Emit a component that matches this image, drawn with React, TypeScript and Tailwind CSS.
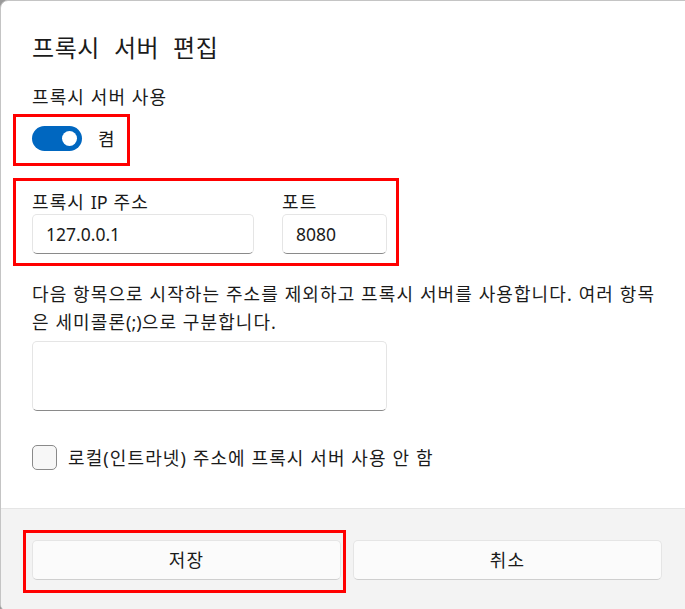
import React from 'react';

const font = { fontFamily: '"Noto Sans", "Noto Sans CJK KR", sans-serif' };

const Annotation: React.FC<{ className: string }> = ({ className }) => (
  <div className={`absolute border-[3px] border-[#ff0000] pointer-events-none ${className}`} />
);

export default function App() {
  return (
    <div className="relative w-[685px] h-[609px] overflow-hidden bg-[#9a9a9a]" style={font}>
      {/* Dialog */}
      <div className="w-[694px] h-[612px] bg-white rounded-l-[8px] border border-[#c4c4c4] flex flex-col overflow-hidden text-[#1b1b1b] tracking-[1.1px]">
        <div className="flex-1 px-[31px] pt-[31px]">
          <h1 className="text-[24px] leading-[32px] font-normal tracking-[0.6px] [word-spacing:7px]">프록시 서버 편집</h1>

          <p className="mt-[21px] text-[18px] leading-[24px]">프록시 서버 사용</p>

          {/* Toggle */}
          <div className="mt-[17px] flex items-center gap-[16px]">
            <div className="w-[50px] h-[25px] rounded-full bg-[#0067c0] flex items-center justify-end pr-[5px]">
              <div className="w-[15px] h-[15px] rounded-full bg-white" />
            </div>
            <span className="text-[18px] leading-[24px]">켬</span>
          </div>

          {/* Address + port */}
          <div className="mt-[39px] flex gap-[28px]">
            <div className="flex flex-col w-[222px]">
              <label className="text-[18px] leading-[24px]">
                프록시 <span className="tracking-normal">IP</span> 주소
              </label>
              <div className="h-[40px] rounded-[5px] border border-[#e5e5e5] border-b-[#8a8a8a] bg-white flex items-center pl-[13px] text-[17.5px] tracking-normal">
                127.0.0.1
              </div>
            </div>
            <div className="flex flex-col w-[105px]">
              <label className="text-[18px] leading-[24px]">포트</label>
              <div className="h-[40px] rounded-[5px] border border-[#e5e5e5] border-b-[#8a8a8a] bg-white flex items-center pl-[13px] text-[17.5px] tracking-normal">
                8080
              </div>
            </div>
          </div>

          {/* Exceptions */}
          <p className="mt-[26px] w-[650px] text-[18px] leading-[28px]">
            다음 항목으로 시작하는 주소를 제외하고 프록시 서버를 사용합니다. 여러 항목
            <br />
            은 세미콜론<span className="tracking-normal">(;)</span>으로 구분합니다.
          </p>
          <div className="mt-[5px] w-[355px] h-[70px] rounded-[5px] border border-[#e5e5e5] border-b-[#8a8a8a] bg-white" />

          {/* Checkbox */}
          <div className="mt-[34px] flex items-center gap-[11px]">
            <div className="w-[25px] h-[25px] rounded-[5px] border border-[#8a8a8a] bg-[#f7f7f7]" />
            <span className="text-[18px] leading-[24px]">로컬(인트라넷) 주소에 프록시 서버 사용 안 함</span>
          </div>
        </div>

        {/* Footer */}
        <div className="h-[103px] shrink-0 bg-[#f3f3f3] border-t border-[#e5e5e5] px-[31px] pt-[31px] flex gap-[12px]">
          <button className="w-[309px] h-[40px] rounded-[5px] bg-[#fbfbfb] border border-[#e5e5e5] border-b-[#cfcfcf] text-[18px]">
            저장
          </button>
          <button className="w-[309px] h-[40px] rounded-[5px] bg-[#fbfbfb] border border-[#e5e5e5] border-b-[#cfcfcf] text-[18px]">
            취소
          </button>
        </div>
      </div>

      {/* Red annotation boxes */}
      <Annotation className="left-[13px] top-[114px] w-[117px] h-[52px]" />
      <Annotation className="left-[13px] top-[178px] w-[386px] h-[88px]" />
      <Annotation className="left-[23px] top-[530px] w-[323px] h-[63px]" />
    </div>
  );
}
